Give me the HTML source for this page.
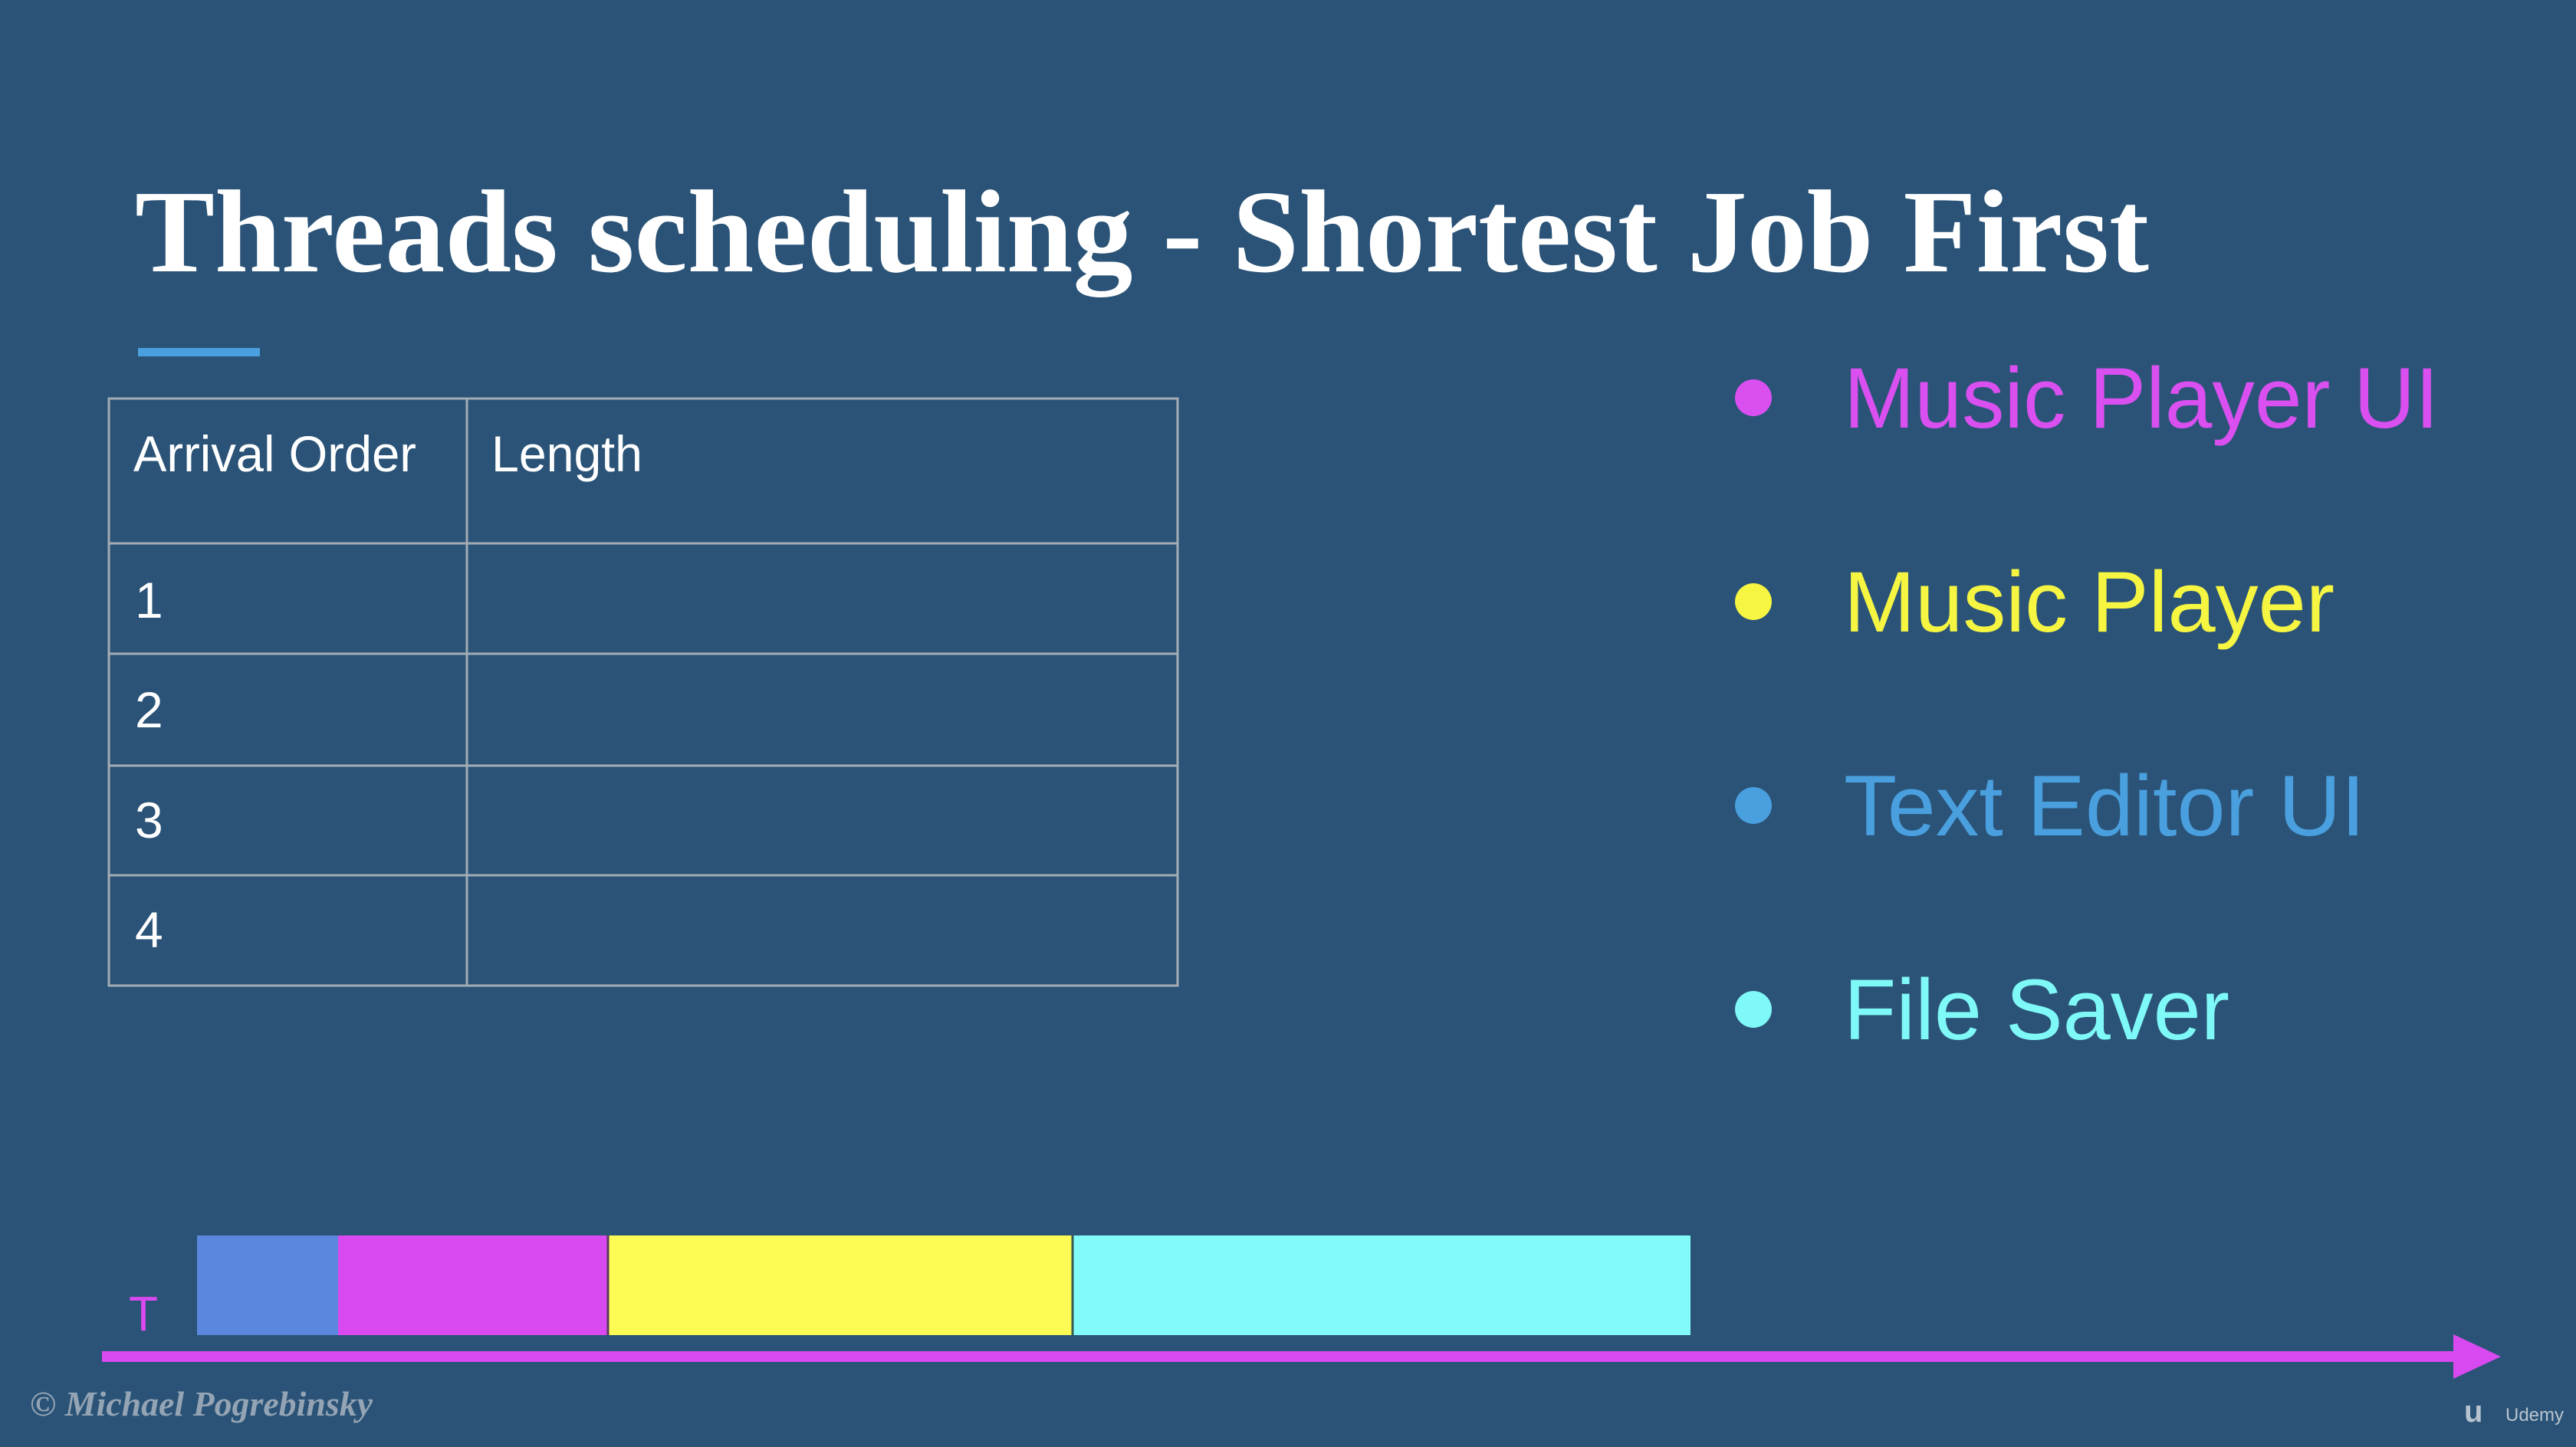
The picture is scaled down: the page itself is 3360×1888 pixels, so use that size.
<!DOCTYPE html>
<html><head><meta charset="utf-8"><style>
html,body{margin:0;padding:0;background:#2a5377;}
svg{display:block;}
</style></head><body>
<svg width="3360" height="1888" viewBox="0 0 3360 1888" xmlns="http://www.w3.org/2000/svg">
<rect width="3360" height="1888" fill="#2a5377"/>
<text x="176" y="354" font-family="Liberation Serif, serif" font-weight="bold" font-size="154" fill="#ffffff" textLength="2627" lengthAdjust="spacingAndGlyphs">Threads scheduling - Shortest Job First</text>
<rect x="180" y="454" width="159" height="11" fill="#4a9fdf"/>
<g fill="none" stroke="#a3acb5" stroke-width="3">
<rect x="142" y="520" width="1394" height="766"/>
<line x1="609" y1="520" x2="609" y2="1286"/>
<line x1="142" y1="709" x2="1536" y2="709"/>
<line x1="142" y1="853" x2="1536" y2="853"/>
<line x1="142" y1="999" x2="1536" y2="999"/>
<line x1="142" y1="1142" x2="1536" y2="1142"/>
</g>
<g font-family="Liberation Sans, sans-serif" font-size="66" fill="#ffffff">
<text x="174" y="615" textLength="369" lengthAdjust="spacingAndGlyphs">Arrival Order</text>
<text x="641" y="615" textLength="197" lengthAdjust="spacingAndGlyphs">Length</text>
<text x="176" y="806">1</text>
<text x="176" y="949">2</text>
<text x="176" y="1093">3</text>
<text x="176" y="1236">4</text>
</g>
<circle cx="2287" cy="519" r="24" fill="#d94ff0"/>
<circle cx="2287" cy="785" r="24" fill="#f5f542"/>
<circle cx="2287" cy="1051" r="24" fill="#4a9fdf"/>
<circle cx="2287" cy="1317" r="24" fill="#7ff9f7"/>
<g font-family="Liberation Sans, sans-serif" font-size="112">
<text x="2405" y="558" fill="#d94ff0" textLength="776" lengthAdjust="spacingAndGlyphs">Music Player UI</text>
<text x="2405" y="824" fill="#f5f542" textLength="640" lengthAdjust="spacingAndGlyphs">Music Player</text>
<text x="2405" y="1090" fill="#4a9fdf" textLength="680" lengthAdjust="spacingAndGlyphs">Text Editor UI</text>
<text x="2405" y="1356" fill="#7ff9f7" textLength="503" lengthAdjust="spacingAndGlyphs">File Saver</text>
</g>
<rect x="257" y="1612" width="184" height="130" fill="#5b87de"/>
<rect x="441" y="1612" width="352" height="130" fill="#d84af0"/>
<rect x="793" y="1612" width="606" height="130" fill="#fcfc55"/>
<rect x="1399" y="1612" width="806" height="130" fill="#80fbf9"/>
<line x1="1399" y1="1612" x2="1399" y2="1742" stroke="#3a5a50" stroke-width="3"/>
<line x1="793" y1="1612" x2="793" y2="1742" stroke="#5a3a60" stroke-width="3"/>
<text x="168" y="1736" font-family="Liberation Sans, sans-serif" font-size="64" fill="#d84af0" textLength="38" lengthAdjust="spacingAndGlyphs">T</text>
<rect x="133" y="1763" width="3075" height="14" fill="#d84af0"/>
<polygon points="3200,1741 3262,1770 3200,1799" fill="#d84af0"/>
<text x="39" y="1847" font-family="Liberation Serif, serif" font-style="italic" font-weight="bold" font-size="46" fill="#94a4b4" textLength="447" lengthAdjust="spacingAndGlyphs">© Michael Pogrebinsky</text>
<text x="3214" y="1855" font-family="Liberation Sans, sans-serif" font-weight="bold" font-size="40" fill="#b8c4cf">u</text>
<text x="3268" y="1854" font-family="Liberation Sans, sans-serif" font-size="24" fill="#b8c4cf">Udemy</text>
</svg>
</body></html>
